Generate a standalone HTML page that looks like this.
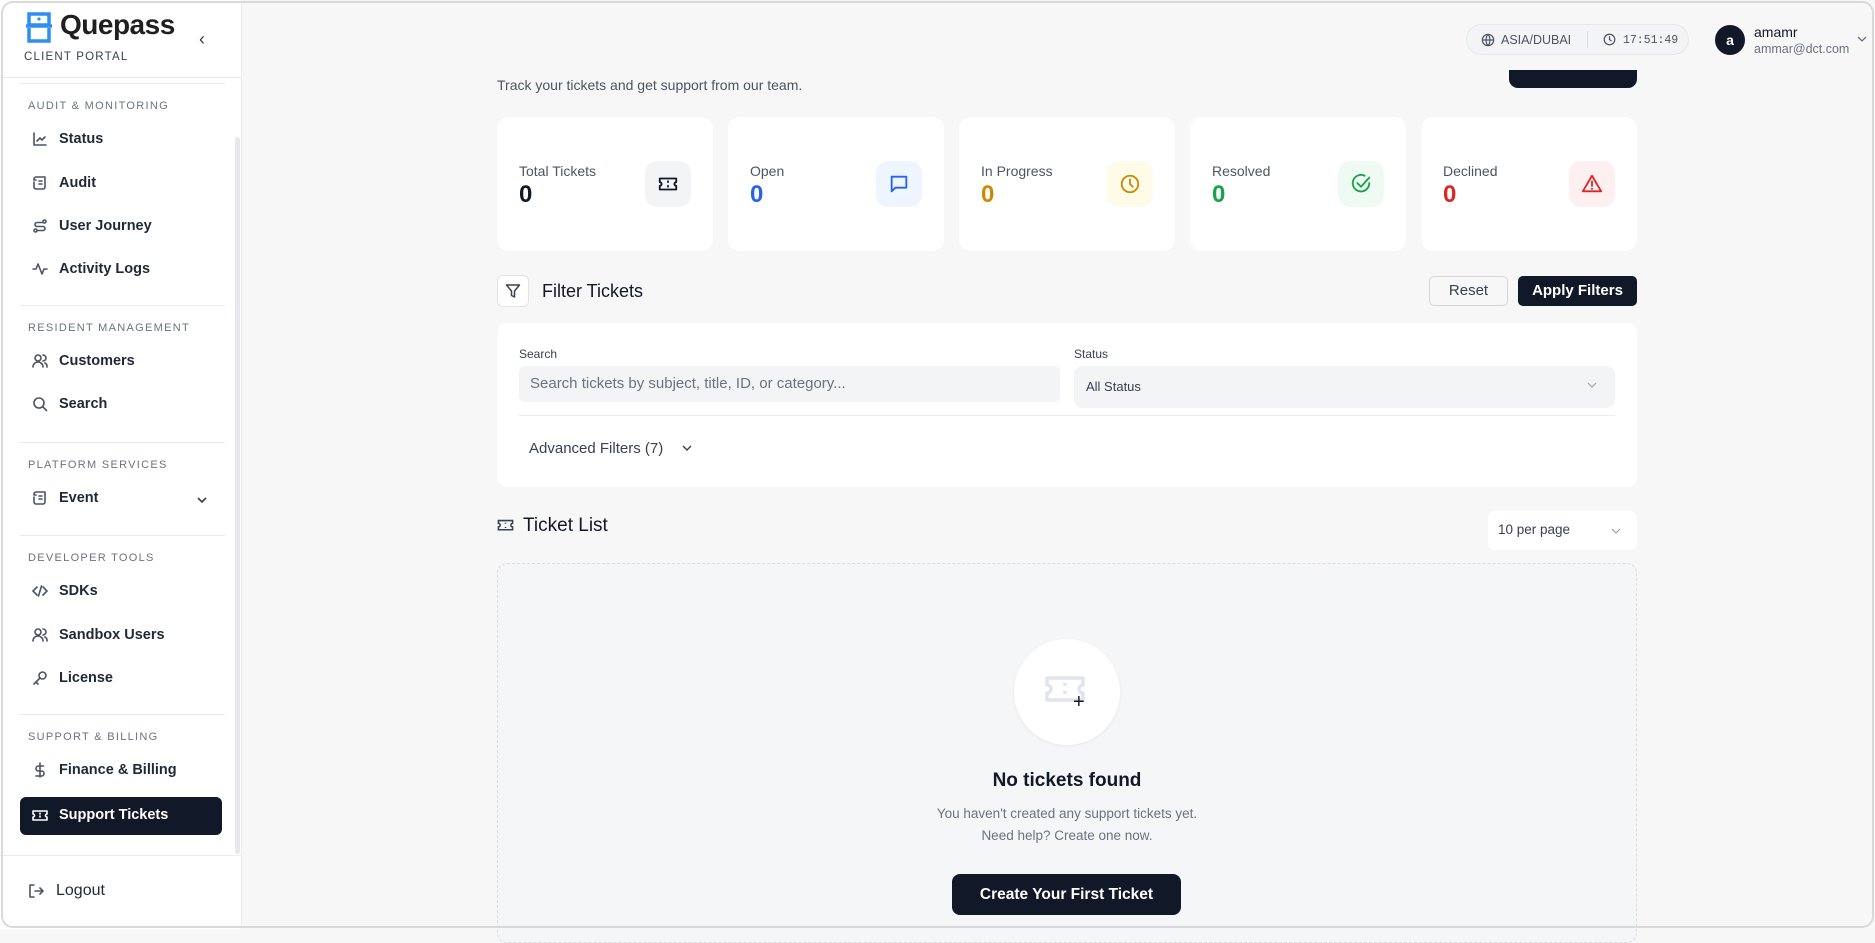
<!DOCTYPE html>
<html><head><meta charset="utf-8"><style>
*{box-sizing:border-box;margin:0;padding:0}
body{width:1875px;height:929px;overflow:hidden;background:#f7f7f8;font-family:"Liberation Sans",sans-serif;color:#111827;position:relative}
.a{position:absolute}
.frame{position:absolute;left:1px;top:1px;width:1873px;height:927px;border:2px solid #d9d9dc;border-radius:12px;pointer-events:none;z-index:9}
.side{left:0;top:0;width:242px;height:929px;background:#fff;border-right:1px solid #ececef}
.sec{position:absolute;left:28px;font-size:11px;letter-spacing:1.3px;color:#6b7280}
.it{position:absolute;left:28px;font-size:14.5px;font-weight:bold;color:#1f2937;display:flex;align-items:center;gap:11px}
.it svg{width:16px;height:16px;fill:none;stroke:#4b5563;stroke-width:1.6;stroke-linecap:round;stroke-linejoin:round}
.hr{position:absolute;left:20px;width:205px;height:1px;background:#ececef}
.card{position:absolute;top:117px;width:216px;height:134px;background:#fff;border-radius:12px}
.card .l{position:absolute;left:22px;top:46px;font-size:14px;color:#4b5563}
.card .v{position:absolute;left:22px;top:64px;font-size:24px;font-weight:bold}
.card .ic{position:absolute;left:148px;top:44px;width:46px;height:46px;border-radius:12px;display:flex;align-items:center;justify-content:center}
.ic svg{width:22px;height:22px;fill:none;stroke-width:2;stroke-linecap:round;stroke-linejoin:round}
</style></head><body>
<div class="frame"></div>
<div class="a side">
  <svg class="a" style="left:24px;top:12px" width="30" height="31" viewBox="0 0 30 31"><path d="M5 2h20v11H5zM2 14h26M5 16v13h20V16" fill="none" stroke="#2f8ef0" stroke-width="3.5"/><circle cx="15" cy="7" r="1.6" fill="#2f8ef0"/></svg>
  <div class="a" style="left:60px;top:9px;font-size:28px;font-weight:bold;color:#1f1f1f;letter-spacing:-0.5px">Quepass</div>
  <div class="a" style="left:24px;top:51px;font-size:11.5px;letter-spacing:1.2px;color:#374151">CLIENT PORTAL</div>
  <div class="a" style="left:199px;top:29px;font-size:18px;color:#374151">‹</div>
  <div class="a" style="left:0;top:77px;width:242px;height:1px;background:#ececef"></div>
  <div class="hr" style="top:83px"></div>
  <div class="a" style="left:235px;top:137px;width:5px;height:717px;background:#e5e8ee;border-radius:3px"></div>
  <div class="sec" style="top:100px">AUDIT &amp; MONITORING</div>
  <div class="it" style="top:131px;left:32px"><svg viewBox="0 0 16 16"><path d="M2 2v12h12M5 10l3-3 2 2 3-3"/></svg>Status</div>
  <div class="it" style="top:175px;left:32px"><svg viewBox="0 0 16 16"><path d="M4 2h9v10a2 2 0 0 1-2 2H4M4 2a2 2 0 0 0-2 2v1h2M4 14a2 2 0 0 1-2-2V7M7 6h3M7 9h3"/></svg>Audit</div>
  <div class="it" style="top:218px;left:32px"><svg viewBox="0 0 16 16"><circle cx="3.5" cy="12.5" r="1.5"/><circle cx="12.5" cy="3.5" r="1.5"/><path d="M5 12.5h6a2 2 0 0 0 0-4H5a2 2 0 0 1 0-4h6"/></svg>User Journey</div>
  <div class="it" style="top:261px;left:32px"><svg viewBox="0 0 16 16"><path d="M1 8h3l2-5 4 10 2-5h3"/></svg>Activity Logs</div>
  <div class="hr" style="top:305px"></div>
  <div class="sec" style="top:322px">RESIDENT MANAGEMENT</div>
  <div class="it" style="top:353px;left:32px"><svg viewBox="0 0 16 16"><circle cx="6" cy="5" r="3"/><path d="M1 14a5 5 0 0 1 10 0M11 2a3 3 0 0 1 0 6M13 10a4 4 0 0 1 2 4"/></svg>Customers</div>
  <div class="it" style="top:396px;left:32px"><svg viewBox="0 0 16 16"><circle cx="7" cy="7" r="5"/><path d="M11 11l3.5 3.5"/></svg>Search</div>
  <div class="hr" style="top:442px"></div>
  <div class="sec" style="top:459px">PLATFORM SERVICES</div>
  <div class="it" style="top:490px;left:32px"><svg viewBox="0 0 16 16"><path d="M4 2h9v10a2 2 0 0 1-2 2H4M4 2a2 2 0 0 0-2 2v1h2M4 14a2 2 0 0 1-2-2V7M7 6h3M7 9h3"/></svg>Event</div>
  <svg class="a" style="left:196px;top:494px" width="12" height="12" viewBox="0 0 12 12"><path d="M2 4l4 4 4-4" fill="none" stroke="#374151" stroke-width="1.6"/></svg>
  <div class="hr" style="top:535px"></div>
  <div class="sec" style="top:552px">DEVELOPER TOOLS</div>
  <div class="it" style="top:583px;left:32px"><svg viewBox="0 0 16 16"><path d="M5 4L1 8l4 4M11 4l4 4-4 4M9.5 3l-3 10"/></svg>SDKs</div>
  <div class="it" style="top:627px;left:32px"><svg viewBox="0 0 16 16"><circle cx="6" cy="5" r="3"/><path d="M1 14a5 5 0 0 1 10 0M11 2a3 3 0 0 1 0 6M13 10a4 4 0 0 1 2 4"/></svg>Sandbox Users</div>
  <div class="it" style="top:670px;left:32px"><svg viewBox="0 0 16 16"><circle cx="10.5" cy="5.5" r="3.5"/><path d="M8 8l-6 6M4 12l2 2"/></svg>License</div>
  <div class="hr" style="top:714px"></div>
  <div class="sec" style="top:731px">SUPPORT &amp; BILLING</div>
  <div class="it" style="top:762px;left:32px"><svg viewBox="0 0 16 16"><path d="M8 1v14M11.5 4H6.5a2.5 2.5 0 0 0 0 5h3a2.5 2.5 0 0 1 0 5H4"/></svg>Finance &amp; Billing</div>
  <div class="a" style="left:20px;top:797px;width:202px;height:38px;background:#111827;border-radius:6px"></div>
  <div class="it" style="top:807px;left:32px;color:#fff"><svg viewBox="0 0 16 16" style="stroke:#fff"><path d="M1 4h14v3a1.5 1.5 0 0 0 0 3v3H1v-3a1.5 1.5 0 0 0 0-3zM8 6v1M8 9v1"/></svg>Support Tickets</div>
  <div class="a" style="left:0;top:855px;width:242px;height:1px;background:#ececef"></div>
  <div class="it" style="top:882px;left:28px;font-weight:normal;font-size:16px;gap:12px"><svg viewBox="0 0 16 16"><path d="M6 2H2v12h4M7 8h8M12 5l3 3-3 3"/></svg>Logout</div>
</div>

<div class="a" style="left:1466px;top:24px;width:223px;height:31px;border:1px solid #e8e8eb;border-radius:16px;background:#f3f4f6"></div>
<svg class="a" style="left:1481px;top:33px" width="14" height="14" viewBox="0 0 16 16" fill="none" stroke="#4b5563" stroke-width="1.4"><circle cx="8" cy="8" r="6.5"/><path d="M1.5 8h13M8 1.5c-3 3.5-3 9.5 0 13M8 1.5c3 3.5 3 9.5 0 13"/></svg>
<div class="a" style="left:1501px;top:33px;font-size:12.5px;color:#4b5563">ASIA/DUBAI</div>
<div class="a" style="left:1587px;top:31px;width:1px;height:17px;background:#e0e0e4"></div>
<svg class="a" style="left:1603px;top:33px" width="13" height="13" viewBox="0 0 16 16" fill="none" stroke="#4b5563" stroke-width="1.5"><circle cx="8" cy="8" r="6.5"/><path d="M8 4v4l2.5 2"/></svg>
<div class="a" style="left:1623px;top:34px;font-size:11.5px;font-family:'Liberation Mono',monospace;color:#4b5563">17:51:49</div>
<div class="a" style="left:1715px;top:25px;width:30px;height:30px;border-radius:50%;background:#111827;color:#fff;font-weight:bold;font-size:14px;text-align:center;line-height:30px">a</div>
<div class="a" style="left:1754px;top:24px;font-size:14px;color:#111827">amamr</div>
<div class="a" style="left:1754px;top:42px;font-size:12.5px;color:#6b7280">ammar@dct.com</div>
<svg class="a" style="left:1857px;top:35px" width="10" height="8" viewBox="0 0 10 8"><path d="M1 2l4 4 4-4" fill="none" stroke="#6b7280" stroke-width="1.3"/></svg>

<div class="a" style="left:497px;top:77px;font-size:14px;color:#4b5563">Track your tickets and get support from our team.</div>
<div class="a" style="left:1509px;top:70px;width:128px;height:18px;background:#111827;border-radius:0 0 9px 9px"></div>

<div class="card" style="left:497px"><div class="l">Total Tickets</div><div class="v" style="color:#111827">0</div><div class="ic" style="background:#f3f4f6"><svg viewBox="0 0 24 24" stroke="#111827"><path d="M3 6h18v4a2 2 0 0 0 0 4v4H3v-4a2 2 0 0 0 0-4zM12 9v1M12 14v1"/></svg></div></div>
<div class="card" style="left:728px"><div class="l">Open</div><div class="v" style="color:#2563eb">0</div><div class="ic" style="background:#eff5ff"><svg viewBox="0 0 24 24" stroke="#2563eb"><path d="M4 4h16v12H8l-4 4z"/></svg></div></div>
<div class="card" style="left:959px"><div class="l">In Progress</div><div class="v" style="color:#ca8a04">0</div><div class="ic" style="background:#fefbe8"><svg viewBox="0 0 24 24" stroke="#ca8a04"><circle cx="12" cy="12" r="9"/><path d="M12 7v5l3 3"/></svg></div></div>
<div class="card" style="left:1190px"><div class="l">Resolved</div><div class="v" style="color:#16a34a">0</div><div class="ic" style="background:#effbf2"><svg viewBox="0 0 24 24" stroke="#16a34a"><path d="M21 11a9 9 0 1 1-5-8"/><path d="M8 11l4 4 9-10"/></svg></div></div>
<div class="card" style="left:1421px"><div class="l">Declined</div><div class="v" style="color:#dc2626">0</div><div class="ic" style="background:#fef0f0"><svg viewBox="0 0 24 24" stroke="#dc2626"><path d="M12 3L2 20h20zM12 9v5M12 17v.5"/></svg></div></div>

<div class="a" style="left:497px;top:275px;width:32px;height:32px;border:1px solid #e3e3e6;border-radius:6px;background:#fff"></div>
<svg class="a" style="left:505px;top:283px" width="16" height="16" viewBox="0 0 16 16" fill="none" stroke="#374151" stroke-width="1.5" stroke-linejoin="round"><path d="M1.5 2h13L9.5 8v6l-3-1.5V8z"/></svg>
<div class="a" style="left:542px;top:281px;font-size:18px;color:#111827">Filter Tickets</div>
<div class="a" style="left:1429px;top:276px;width:79px;height:30px;border:1px solid #d6d6da;border-radius:5px;background:#f7f7f8;font-size:15px;color:#374151;text-align:center;line-height:28px">Reset</div>
<div class="a" style="left:1518px;top:276px;width:119px;height:30px;border-radius:5px;background:#111827;font-size:15px;font-weight:bold;color:#fff;text-align:center;line-height:30px">Apply Filters</div>

<div class="a" style="left:497px;top:323px;width:1140px;height:164px;background:#fff;border-radius:10px"></div>
<div class="a" style="left:519px;top:347px;font-size:12px;color:#374151">Search</div>
<div class="a" style="left:519px;top:366px;width:541px;height:36px;background:#f3f4f6;border-radius:6px;font-size:15px;color:#6b7280;padding:9px 11px">Search tickets by subject, title, ID, or category...</div>
<div class="a" style="left:1074px;top:347px;font-size:12px;color:#374151">Status</div>
<div class="a" style="left:1074px;top:366px;width:541px;height:42px;background:#f3f4f6;border-radius:8px;font-size:13px;color:#374151;padding:13px 12px">All Status</div>
<svg class="a" style="left:1587px;top:381px" width="10" height="8" viewBox="0 0 10 8"><path d="M1 2l4 4 4-4" fill="none" stroke="#9ca3af" stroke-width="1.2"/></svg>
<div class="a" style="left:519px;top:415px;width:1096px;height:1px;background:#ececef"></div>
<div class="a" style="left:529px;top:440px;font-size:15px;color:#374151">Advanced Filters (7)</div>
<svg class="a" style="left:682px;top:444px" width="10" height="8" viewBox="0 0 10 8"><path d="M1 2l4 4 4-4" fill="none" stroke="#374151" stroke-width="1.4"/></svg>

<svg class="a" style="left:497px;top:518px" width="17" height="15" viewBox="0 0 24 20" fill="none" stroke="#374151" stroke-width="2.2"><path d="M2 3h20v4a2.5 2.5 0 0 0 0 5v4H2v-4a2.5 2.5 0 0 0 0-5zM12 6v1.5M12 12v1.5"/></svg>
<div class="a" style="left:523px;top:515px;font-size:19px;color:#111827">Ticket List</div>
<div class="a" style="left:1488px;top:511px;width:149px;height:39px;background:#fff;border-radius:7px;font-size:13.5px;color:#374151;padding:11px 10px">10 per page</div>
<svg class="a" style="left:1611px;top:527px" width="10" height="8" viewBox="0 0 10 8"><path d="M1 2l4 4 4-4" fill="none" stroke="#9ca3af" stroke-width="1.2"/></svg>

<div class="a" style="left:497px;top:563px;width:1140px;height:380px;border:1px dashed #dcdde1;border-radius:10px;background:#f5f6f8"></div>
<div class="a" style="left:1014px;top:639px;width:106px;height:106px;border-radius:50%;background:#fff;box-shadow:0 1px 3px rgba(0,0,0,.06)"></div>
<svg class="a" style="left:1045px;top:675px" width="40" height="30" viewBox="0 0 40 30" fill="none" stroke="#dfe4ee" stroke-width="3.5" stroke-linejoin="round"><path d="M2 3h36v7a4 4 0 0 0 0 8v7H2v-7a4 4 0 0 0 0-8zM20 8v3M20 16v3"/></svg>
<div class="a" style="left:1073px;top:692px;font-size:20px;color:#111827;line-height:20px">+</div>
<div class="a" style="left:867px;width:400px;text-align:center;top:770px;font-size:19px;font-weight:bold;color:#111827">No tickets found</div>
<div class="a" style="left:867px;width:400px;text-align:center;top:803px;font-size:13.5px;color:#6b7280;line-height:22px">You haven't created any support tickets yet.<br>Need help? Create one now.</div>
<div class="a" style="left:952px;top:874px;width:229px;height:41px;background:#111827;border-radius:8px;color:#fff;font-size:15.5px;font-weight:bold;text-align:center;line-height:41px">Create Your First Ticket</div>
</body></html>
